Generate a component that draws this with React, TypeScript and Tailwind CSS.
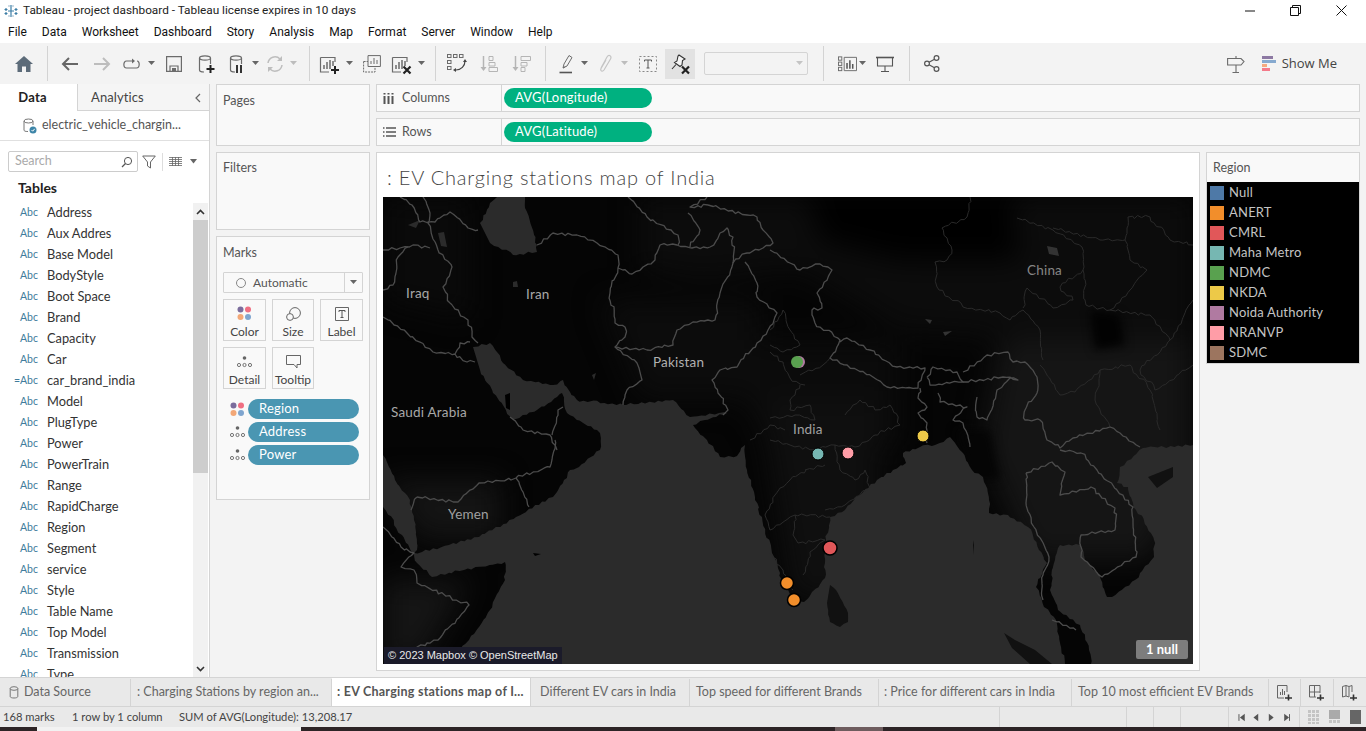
import React from "react";

const G = "#6b6b6b";
const Ico = ({ children, w = 24, h = 24 }: { children: React.ReactNode; w?: number; h?: number }) => (
  <svg width={w} height={h} viewBox={`0 0 ${w} ${h}`} fill="none" className="block">{children}</svg>
);
const Caret = ({ c = "#666" }: { c?: string }) => (
  <svg width="8" height="5" viewBox="0 0 8 5" className="block"><path d="M0 0H7L3.5 4Z" fill={c} /></svg>
);
const Slot = ({ w, children }: { w: string; children?: React.ReactNode }) => (
  <div className={`${w} flex h-full shrink-0 items-center justify-center`}>{children}</div>
);
const Sep = ({ w }: { w: string }) => (
  <div className={`${w} flex h-full shrink-0 items-center justify-center`}>
    <div className="h-[35px] w-[1px] bg-[#d3d3d3]" />
  </div>
);
const Cyl = ({ c = G }: { c?: string }) => (
  <g stroke={c} strokeWidth="1.2" fill="none">
    <ellipse cx="9" cy="5" rx="5.5" ry="2.2" />
    <path d="M3.5 5V17C3.5 18.5 5.5 19 8 19M14.5 5V11" />
  </g>
);
const Bars = () => (
  <g>
    <path d="M1.5 5.5H16V10M1.5 5.5V20H10" stroke={G} strokeWidth="1.2" />
    <path d="M5 17V13M8 17V10M11 17V8M14 14V9" stroke={G} strokeWidth="1.5" />
  </g>
);
const Plus = ({ x, y }: { x: number; y: number }) => (
  <path d={`M${x - 4} ${y}H${x + 4}M${x} ${y - 4}V${y + 4}`} stroke="#222" strokeWidth="2" />
);
const X = ({ x, y }: { x: number; y: number }) => (
  <path d={`M${x - 3.5} ${y - 3.5}L${x + 3.5} ${y + 3.5}M${x + 3.5} ${y - 3.5}L${x - 3.5} ${y + 3.5}`} stroke="#222" strokeWidth="2.2" />
);

const Toolbar = () => (
  <div className="flex h-[41px] shrink-0 bg-[#f3f3f3]">
    <Slot w="w-[8px]" />
    <Slot w="w-[32px]"><Ico w={20} h={20}><path d="M10 2L1 10H3.5V18H8V12.5H12V18H16.5V10H19Z" fill="#5c6b79" /></Ico></Slot>
    <Sep w="w-[14px]" />
    <Slot w="w-[32px]"><Ico w={18} h={16}><path d="M17 8H2M8 2L2 8L8 14" stroke="#666" strokeWidth="2" /></Ico></Slot>
    <Slot w="w-[32px]"><Ico w={18} h={16}><path d="M1 8H16M10 2L16 8L10 14" stroke="#bdbdbd" strokeWidth="2" /></Ico></Slot>
    <Slot w="w-[26px]"><Ico w={19} h={12}><path d="M11 3H4.5C1 3 1 10 4.5 10H14.5C18 10 18 3 15 3" stroke={G} strokeWidth="1.2" /><path d="M10 .5L13 3L10 5.5Z" fill={G} /></Ico></Slot>
    <Slot w="w-[16px]"><Caret /></Slot>
    <Slot w="w-[28px]"><Ico w={16} h={16}><path d="M.6.6H15.4V15.4H.6Z" stroke={G} strokeWidth="1.2" /><path d="M4 15V10H12V15" stroke={G} strokeWidth="1.2" /><path d="M6 12H10V15H6Z" fill={G} /></Ico></Slot>
    <Slot w="w-[36px]"><Ico w={20} h={22}><Cyl /><Plus x={14.5} y={16} /></Ico></Slot>
    <Slot w="w-[24px]"><Ico w={18} h={22}><Cyl c="#6b6b6b" /><path d="M10 12V20M14 12V20" stroke="#333" strokeWidth="2" /></Ico></Slot>
    <Slot w="w-[16px]"><Caret /></Slot>
    <Slot w="w-[22px]"><Ico w={18} h={18}><path d="M2 8A7 7 0 0 1 14 4M16 10A7 7 0 0 1 4 14" stroke="#bdbdbd" strokeWidth="1.5" /><path d="M16 1V6H11ZM2 17V12H7Z" fill="#bdbdbd" /></Ico></Slot>
    <Slot w="w-[16px]"><Caret c="#bdbdbd" /></Slot>
    <Sep w="w-[14px]" />
    <Slot w="w-[28px]"><Ico w={22} h={24}><Bars /><Plus x={16} y={18} /></Ico></Slot>
    <Slot w="w-[12px]"><Caret /></Slot>
    <Slot w="w-[32px]"><Ico w={18} h={18}><path d="M5 .6H17.4V11.5H5Z" stroke={G} fill="#f3f3f3" /><path d="M8 9V6M11 9V3M14 9V5" stroke={G} /><path d="M.6 6.5H5M.6 6.5V17H12V11.5" stroke={G} strokeDasharray="2 1" /></Ico></Slot>
    <Slot w="w-[28px]"><Ico w={22} h={24}><Bars /><X x={16} y={18} /></Ico></Slot>
    <Slot w="w-[12px]"><Caret /></Slot>
    <Sep w="w-[14px]" />
    <Slot w="w-[30px]"><Ico w={20} h={20}><g stroke={G}><rect x=".5" y=".5" width="3.5" height="3" /><rect x="6.5" y=".5" width="3.5" height="3" /><rect x="12.5" y=".5" width="3.5" height="3" /><rect x=".5" y="6.5" width="3.5" height="3" /><rect x=".5" y="12.5" width="3.5" height="3" /></g><path d="M18 7C18 12 14 16 9 16" stroke="#444" strokeWidth="1.2" /><path d="M16 8L18 5L20 8ZM9 14V18L6 16Z" fill="#444" /></Ico></Slot>
    <Slot w="w-[34px]"><Ico w={18} h={18}><path d="M3.5 1V14" stroke="#b5b5b5" strokeWidth="1.5" /><path d="M.5 12H6.5L3.5 16Z" fill="#b5b5b5" /><path d="M9 1.5H13V5.5H9ZM9 7.5H15V11H9ZM9 12.5H17.5V16.5H9Z" stroke="#b5b5b5" /></Ico></Slot>
    <Slot w="w-[32px]"><Ico w={20} h={18}><path d="M3.5 1V14" stroke="#b5b5b5" strokeWidth="1.5" /><path d="M.5 12H6.5L3.5 16Z" fill="#b5b5b5" /><path d="M9 1.5H18.5V5.5H9ZM9 7.5H15V11H9ZM9 12.5H13V16.5H9Z" stroke="#b5b5b5" /></Ico></Slot>
    <Sep w="w-[14px]" />
    <Slot w="w-[27px]"><Ico w={14} h={20}><path d="M4 14L5 10L10 1.5L13 3.5L8 12Z" stroke={G} /><path d="M4 14L6.5 12.5" stroke={G} /><path d="M.5 18.5H13" stroke="#555" strokeWidth="1.6" /></Ico></Slot>
    <Slot w="w-[12px]"><Caret /></Slot>
    <Slot w="w-[28px]"><Ico w={14} h={20}><path d="M3 14L9 3C11 0 14 2 12.5 5L6 16C4.5 18 2 17 3 14.5L8 6" stroke="#c4c4c4" strokeWidth="1.2" /></Ico></Slot>
    <Slot w="w-[12px]"><Caret c="#bdbdbd" /></Slot>
    <Slot w="w-[34px]"><Ico w={18} h={16}><path d="M.5.5H17.5V15.5H.5Z" stroke="#888" strokeDasharray="2 2" /><path d="M5.5 4H12.5V5.5M5.5 4V5.5M9 4V12M7.5 12H10.5" stroke="#555" /></Ico></Slot>
    <div className="flex h-[30px] w-[30px] shrink-0 items-center justify-center self-center bg-[#e2e2e2]">
      <Ico w={20} h={22}><path d="M9 2L15 6L12.5 7.500L12 12L10 13.500L4.500 9.500L7 8L8 3Z" stroke="#333" strokeWidth="1.1" fill="#f5f5f5" /><path d="M6 11.500L2 16" stroke="#333" strokeWidth="1.1" /><X x={15.5} y={17} /></Ico>
    </div>
    <Slot w="w-[9px]" />
    <div className="h-[23px] w-[104px] shrink-0 self-center flex items-center justify-end rounded-[2px] border border-[#d4d4d4] bg-[#f3f3f3] pr-[3px]"><Caret c="#c4c4c4" /></div>
    <Sep w="w-[30px]" />
    <Slot w="w-[19px]"><Ico w={20} h={16}><g stroke={G}><rect x=".5" y=".5" width="3.5" height="3.5" /><rect x=".5" y="6" width="3.5" height="3.5" /><rect x=".5" y="11.5" width="3.5" height="3.5" /><path d="M6.5 1H19.5V15H6.5Z" /></g><path d="M9.5 13V7M12.5 13V4M15.5 13V8" stroke="#555" strokeWidth="1.6" /></Ico></Slot>
    <Slot w="w-[12px]"><Caret /></Slot>
    <Slot w="w-[32px]"><Ico w={18} h={16}><path d="M0 1.5H18" stroke="#555" strokeWidth="1.6" /><path d="M1.5 1.5V10H16.5V1.5M9 10V15M5 15.5H13" stroke="#555" strokeWidth="1.1" /></Ico></Slot>
    <Sep w="w-[16px]" />
    <Slot w="w-[30px]"><Ico w={16} h={17}><circle cx="3" cy="8.5" r="2.4" stroke="#555" strokeWidth="1.2" /><circle cx="12.5" cy="3" r="2.4" stroke="#555" strokeWidth="1.2" /><circle cx="12.5" cy="14" r="2.4" stroke="#555" strokeWidth="1.2" /><path d="M5 7.3L10.5 4.2M5 9.7L10.5 12.8" stroke="#555" strokeWidth="1.2" /></Ico></Slot>
    <div className="flex-1" />
    <Slot w="w-[20px]"><Ico w={18} h={18}><path d="M.6 3.5H14L17 6.5L14 10H.6Z" stroke={G} strokeWidth="1.1" /><path d="M9 1V3.5M9 10V17M5.5 17.5H12" stroke={G} strokeWidth="1.1" /></Ico></Slot>
    <div className="w-[16px] shrink-0" />
    <div className="flex shrink-0 items-center gap-[6px] pr-[29px]">
      <svg width="14" height="16" viewBox="0 0 14 16" className="block"><path d="M0 0H11V3H0Z" fill="#8d79a3" /><path d="M0 4H14V7H0Z" fill="#86a9cf" /><path d="M0 8H5V11H0Z" fill="#f4a97f" /><path d="M0 12H8V15H0Z" fill="#f47a8a" /></svg>
      <span className="font-['Open_Sans'] text-[13px] text-[#444]">Show Me</span>
    </div>
  </div>
);

const Dots4 = () => (
  <svg width="15" height="15" viewBox="0 0 15 15" className="block"><circle cx="3.5" cy="3.5" r="3" fill="#7b6c9c" /><circle cx="11" cy="3.5" r="3" fill="#ef6f82" /><circle cx="3.5" cy="11" r="3" fill="#f3a878" /><circle cx="11" cy="11" r="3" fill="#7fa5cf" /></svg>
);
const DetailIco = () => (
  <svg width="15" height="12" viewBox="0 0 15 12" className="block"><circle cx="7.5" cy="2" r="1.8" fill="#666" /><g stroke="#666" fill="none" strokeWidth=".9"><circle cx="2" cy="9" r="1.6" /><circle cx="7.5" cy="9" r="1.6" /><circle cx="13" cy="9" r="1.6" /></g></svg>
);

const fields = ["Address", "Aux Addres", "Base Model", "BodyStyle", "Boot Space", "Brand", "Capacity", "Car", "car_brand_india", "Model", "PlugType", "Power", "PowerTrain", "Range", "RapidCharge", "Region", "Segment", "service", "Style", "Table Name", "Top Model", "Transmission", "Type"];

const Sidebar = () => (
  <div className="flex w-[210px] shrink-0 flex-col overflow-hidden border-r border-[#d4d4d4] bg-white">
    <div className="flex h-[27px] shrink-0 text-[13px] font-['Lato']">
      <div className="flex w-[77px] items-center justify-center pr-[12px] font-bold text-[#222] tracking-[.2px]">Data</div>
      <div className="flex flex-1 items-center border-b border-l border-[#d4d4d4] bg-[#f5f5f5] pl-[13px] pt-[1px] text-[#444]">
        <span className="tracking-[.1px]">Analytics</span>
        <svg width="8" height="10" viewBox="0 0 8 10" className="ml-auto mr-[7px]"><path d="M6 1L2 5L6 9" stroke="#666" strokeWidth="1.2" fill="none" /></svg>
      </div>
    </div>
    <div className="flex h-[30px] shrink-0 items-center gap-[5px] border-b border-[#e0e0e0] pl-[23px] font-['Lato'] text-[12.5px] text-[#555]">
      <svg width="14" height="16" viewBox="0 0 14 16"><path d="M1 3V12C1 13 2 13.5 5 13.5M10 3V7" stroke="#777" fill="none" /><ellipse cx="5.5" cy="3" rx="4.5" ry="2" stroke="#777" fill="none" /><circle cx="10" cy="12" r="3.5" fill="#3d85a8" /><path d="M8.5 12L9.7 13.2L11.7 10.8" stroke="#fff" fill="none" /></svg>
      <span>electric_vehicle_chargin...</span>
    </div>
    <div className="flex h-[21px] shrink-0 mt-[10px] ml-[8px] items-center">
      <div className="flex h-[21px] w-[130px] items-center justify-between rounded-[2px] border border-[#ccc] pl-[6px] pr-[4px] font-['Lato'] text-[12.5px] text-[#aaa]">
        <span>Search</span>
        <svg width="12" height="12" viewBox="0 0 12 12"><circle cx="7" cy="5" r="3.6" stroke="#555" fill="none" /><path d="M4.5 7.5L1 11" stroke="#555" strokeWidth="1.2" /></svg>
      </div>
      <svg width="14" height="14" viewBox="0 0 14 14" className="ml-[4px]"><path d="M.7 1H13.3L8.5 7V13L5.5 11V7Z" stroke="#666" fill="none" /></svg>
      <div className="ml-[6px] h-[18px] w-[1px] bg-[#ddd]" />
      <svg width="13" height="9" viewBox="0 0 13 9" className="ml-[6px]"><path d="M0 .5H13M0 2.5H13M0 4.5H13M0 6.5H13M0 8.5H13M3.5 0V9M6.5 0V9M9.5 0V9" stroke="#666" strokeWidth=".8" /></svg>
      <svg width="7" height="5" viewBox="0 0 7 5" className="ml-[8px]"><path d="M0 0H7L3.5 4.5Z" fill="#666" /></svg>
    </div>
    <div className="shrink-0 pl-[18px] pt-[6px] font-['Lato'] text-[14px] font-bold leading-[20px] text-[#222]">Tables</div>
    <div className="flex min-h-0 flex-1 pt-[5px]">
      <div className="min-w-0 flex-1 overflow-hidden">
        <div className="-mt-[1px]">
          {fields.map((f) => (
            <div key={f} className="flex h-[21px] items-center">
              <span className="w-[47px] shrink-0 pr-[9px] text-right font-['Lato'] text-[10.5px] text-[#3f7c9c]">{f === "car_brand_india" ? "=Abc" : "Abc"}</span>
              <span className="font-['Lato'] text-[12.8px] text-[#333]">{f}</span>
            </div>
          ))}
        </div>
      </div>
      <div className="mr-[1px] flex w-[15px] shrink-0 flex-col">
        <div className="flex h-[17px] shrink-0 items-center justify-center bg-[#f1f1f1]"><svg width="9" height="6" viewBox="0 0 9 6"><path d="M1 5L4.5 1.5L8 5" stroke="#333" strokeWidth="1.6" fill="none" /></svg></div>
        <div className="h-[253px] shrink-0 bg-[#cdcdcd]" />
        <div className="flex-1 bg-[#f1f1f1]" />
        <div className="flex h-[17px] shrink-0 items-center justify-center bg-[#f1f1f1]"><svg width="9" height="6" viewBox="0 0 9 6"><path d="M1 1L4.5 4.5L8 1" stroke="#333" strokeWidth="1.6" fill="none" /></svg></div>
      </div>
    </div>
  </div>
);

const MarkBtn = ({ label, children }: { label: string; children: React.ReactNode }) => (
  <div className="flex h-[42px] flex-col items-center border border-[#d4d4d4] bg-[#f9f9f9] pt-[5px]">
    <div className="flex h-[17px] items-center justify-center">{children}</div>
    <span className="mt-[3px] font-['Lato'] text-[12px] leading-[14px] text-[#444]">{label}</span>
  </div>
);
const Pill = ({ icon, label }: { icon: React.ReactNode; label: string }) => (
  <div className="flex h-[20px] items-center">
    <div className="flex w-[25px] shrink-0 items-center justify-start pl-[7px]">{icon}</div>
    <div className="flex h-[20px] w-[111px] items-center rounded-full bg-[#4a96b2] pl-[11px] font-['Lato'] text-[13px] tracking-[.2px] text-white">{label}</div>
  </div>
);

const Shelves = () => (
  <div className="flex w-[154px] shrink-0 flex-col gap-[6px]">
    <div className="h-[62px] shrink-0 border border-[#d4d4d4] bg-[#f9f9f9] pl-[6px] pt-[7px] font-['Lato'] text-[12.5px] text-[#555]">Pages</div>
    <div className="h-[78px] shrink-0 border border-[#d4d4d4] bg-[#f9f9f9] pl-[6px] pt-[6px] font-['Lato'] text-[12.5px] text-[#555]">Filters</div>
    <div className="h-[264px] shrink-0 border border-[#d4d4d4] bg-[#f9f9f9] px-[6px] pt-[8px]">
      <div className="font-['Lato'] text-[12.5px] leading-[15px] text-[#555]">Marks</div>
      <div className="mt-[12px] flex h-[21px] w-[140px] items-center rounded-[1px] border border-[#d4d4d4] font-['Lato'] text-[12px] text-[#555]">
        <span className="ml-[12px] mr-[7px] h-[10px] w-[10px] rounded-full border border-[#888]" />
        <span>Automatic</span>
        <div className="ml-auto flex h-full w-[18px] items-center justify-center border-l border-[#d4d4d4]"><Caret /></div>
      </div>
      <div className="mt-[6px] grid w-[140px] grid-cols-[43px_42px_43px] gap-[6px]">
        <MarkBtn label="Color"><Dots4 /></MarkBtn>
        <MarkBtn label="Size"><svg width="15" height="14" viewBox="0 0 15 14"><circle cx="9" cy="6" r="5.4" stroke="#666" fill="none" /><circle cx="4" cy="10" r="3.4" stroke="#666" fill="#f9f9f9" /></svg></MarkBtn>
        <MarkBtn label="Label"><svg width="14" height="14" viewBox="0 0 14 14"><path d="M.5.5H13.5V13.5H.5Z" stroke="#666" fill="none" /><path d="M4 5V3.5H10V5M7 3.5V10.5M5.5 10.5H8.5" stroke="#555" fill="none" /></svg></MarkBtn>
        <MarkBtn label="Detail"><DetailIco /></MarkBtn>
        <MarkBtn label="Tooltip"><svg width="15" height="14" viewBox="0 0 15 14"><path d="M.5.5H14.5V9.5H11V13L8 9.5H.5Z" stroke="#666" fill="none" /></svg></MarkBtn>
      </div>
      <div className="mt-[10px] flex flex-col gap-[3px]">
        <Pill icon={<Dots4 />} label="Region" />
        <Pill icon={<DetailIco />} label="Address" />
        <Pill icon={<DetailIco />} label="Power" />
      </div>
    </div>
  </div>
);

const Shelf = ({ icon, label, pill }: { icon: React.ReactNode; label: string; pill: string }) => (
  <div className="flex h-[28px] shrink-0 border border-[#d4d4d4] bg-[#f9f9f9]">
    <div className="flex w-[125px] shrink-0 items-center border-r border-[#d4d4d4] pl-[6px] font-['Lato'] text-[12.5px] text-[#555]">
      <span className="flex w-[19px] shrink-0">{icon}</span>{label}
    </div>
    <div className="flex items-center pl-[2px]">
      <div className="flex h-[20px] w-[148px] items-center rounded-full bg-[#00b180] pl-[11px] font-['Lato'] text-[13px] tracking-[.2px] text-white">{pill}</div>
    </div>
  </div>
);

// Adds a fixed, hand-tuned roughness to the polylines of the map so that they read as natural borders.
const rough = (d: string, amp: number, step = 5): string => {
  let out = "";
  let n = 0;
  d.split("M").filter(Boolean).forEach((sub) => {
    const closed = sub.trim().endsWith("Z");
    const pts = sub.replace("Z", "").trim().split("L").map((p) => p.trim().split(/\s+/).map(Number));
    out += `M${pts[0][0]} ${pts[0][1]}`;
    for (let i = 1; i < pts.length; i++) {
      const [ax, ay] = pts[i - 1];
      const [bx, by] = pts[i];
      const len = Math.hypot(bx - ax, by - ay);
      const k = Math.max(1, Math.round(len / step));
      const onEdge = (x: number, y: number) => x <= 383 || x >= 1193 || y <= 197 || y >= 664;
      for (let j = 1; j < k; j++) {
        const t = j / k;
        n += 1;
        const w = (Math.sin(n * 12.9898) * 43758.5453) % 1;
        const v = (Math.sin(n * 78.233) * 12543.123) % 1;
        const s = onEdge(ax, ay) && onEdge(bx, by) ? 0 : amp;
        out += `L${(ax + (bx - ax) * t + w * s).toFixed(1)} ${(ay + (by - ay) * t + v * s).toFixed(1)}`;
      }
      out += `L${bx} ${by}`;
    }
    if (closed) out += "Z";
  });
  return out;
};

const C = "#4c4c4c";
const borders = [
  "M423 197L430 213L428 223L438 250L452 267L443 287L450 303L468 320L472 337L478 343",
  "M383 250L400 248L413 245L430 248",
  "M383 290L393 285L398 257L408 247",
  "M383 317L407 333L433 352L455 354L460 343L470 342M455 354L467 362L475 362",
  "M400 197L412 205L420 222L435 222L450 212L468 228L478 230",
  "M537 245L553 233L577 235L597 243L618 255L618 268L610 293L615 323L625 327L625 337L615 347L637 363L642 380L627 390L623 405",
  "M618 268L632 274L643 267L655 260L660 245L677 245L692 248L710 247L727 228L733 237L733 263L720 293L715 320L693 322L677 330L673 345L647 350L615 347",
  "M628 197L647 217L678 235L678 245M688 213L700 230L690 247",
  "M708 205L747 215L757 217L763 230L773 243L747 253L733 263",
  "M707 197L690 207L708 205",
  "M745 262L757 283L757 297L777 313L768 330L757 343L737 367L720 370L712 380L718 393L728 410L723 415",
  "M770 250L790 263L800 270L820 264L832 270L817 293L822 308L812 310L815 323L840 340L830 358L873 377L887 387L918 388L925 368L897 367L870 350L847 338L840 342",
  "M927 377L933 367L957 372L963 382L930 385L927 377",
  "M963 372L987 355L1008 352L1013 362L1025 362L1037 377L1037 393L1025 410L1025 420L1040 420L1047 440L1060 448L1073 438L1110 427L1120 433L1140 447",
  "M920 388L918 398L927 407L918 413L927 423L927 443",
  "M938 393L940 402L967 407L953 420L963 423L970 447",
  "M963 382L1003 377L1018 380L1010 378L997 390L987 420L977 417L977 397",
  "M1026 473L1052 462L1065 472L1060 495L1091 487L1115 508L1115 530L1081 535L1081 557L1102 577L1136 557L1133 507L1097 470L1081 453L1060 450",
  "M1026 473L1026 503L1034 527L1049 557L1043 575L1043 600",
  "M1052 620L1076 630",
  "M417 497L458 502L479 483L516 478L550 467L555 440",
  "M516 478L529 507M417 497L411 510",
  "M510 417L523 430L550 435L557 450M552 435L558 410L563 407",
  "M383 527L401 547L414 553L401 567L414 570L417 583L469 605L438 640L417 647L401 664",
];
const faint = [
  "M970 197L967 217L942 228L952 250L947 260L935 262L937 287L963 307L1000 313L1010 320L1023 310L1040 330L1043 360",
  "M1017 218L1053 230L1082 247L1083 270L1060 287L1073 300L1053 308L1027 288L1023 308",
  "M1053 228L1100 240L1125 240L1128 217L1150 217L1170 240L1193 245",
  "M1125 240L1130 260L1147 270L1130 290L1110 310L1086 305L1083 270",
  "M1110 310L1150 315L1170 340L1140 370L1155 390L1193 365",
  "M1040 365L1060 395L1075 392L1100 370L1130 365L1150 390M1100 370L1095 400L1110 427",
  "M1150 390L1160 430M1193 300L1170 340",
  "M770 330L783 310L790 330L800 345L783 352L770 345M770 352L783 362L790 378L805 385M800 375L823 365L830 358",
  "M800 385L790 400L790 410L810 405L815 420L795 415L770 418",
  "M770 440L790 445L815 450L835 445L855 447L875 435L900 425L890 405L875 410L860 400L845 415",
  "M750 440L770 425L785 430M835 445L840 470L855 480L865 470L870 488L845 505L825 510M806 470L790 480L775 495L765 515L770 530L795 515L830 517",
  "M795 515L793 535L798 543L825 540L810 552L803 575M770 553L783 570L793 590",
  "M825 465L805 470",
];
const seas = [
  "M473 347L490 343L497 352L503 363L523 380L553 385L563 380L570 392L577 400L623 405L673 400L690 417L727 413L705 420L693 425L707 440L720 457L737 456L745 445L747 470L755 500L762 517L772 553L782 580L793 597L804 602L812 592L825 578L825 563L826 540L830 517L845 510L860 495L877 480L893 470L906 463L903 453L920 447L935 445L950 437L957 446L963 453L972 470L983 477L989 500L989 513L1008 515L1028 527L1039 550L1047 563L1036 587L1044 607L1056 620L1065 664L448 664L469 640L490 610L505 580L505 562L464 570L432 577L417 563L414 553L422 552L479 537L516 517L553 497L570 470L579 467L600 450L600 433L567 413L562 393L557 397L537 410L513 420L493 393L480 370Z",
  "M1193 445L1143 448L1120 467L1117 483L1128 487L1133 503L1154 540L1154 557L1135 580L1112 597L1107 597L1100 575L1085 560L1080 545L1060 545L1055 560L1050 590L1058 610L1080 625L1089 650L1091 664L1193 664Z",
  "M383 455L395 480L410 500L414 520L417 550L414 553L402 535L383 507Z",
  "M480 223L490 203L497 197L525 197L525 208L537 245L537 252L513 255L490 243Z",
];

const MapView = () => (
  <div className="relative h-[467px] w-full overflow-hidden bg-black">
    <svg width="810" height="467" viewBox="383 197 810 467" className="absolute inset-0 block">
      <defs>
        <filter id="b" x="-30%" y="-30%" width="160%" height="160%" colorInterpolationFilters="sRGB"><feGaussianBlur stdDeviation="14" /></filter>
        <filter id="c" x="-30%" y="-30%" width="160%" height="160%" colorInterpolationFilters="sRGB"><feGaussianBlur stdDeviation="5" /></filter>
      </defs>
      <rect x="383" y="197" width="810" height="467" fill="#050505" />
      <g filter="url(#b)">
        <path d="M640 197H1193V420L1040 340L900 330L800 270L700 280L640 270Z" fill="#0c0c0c" />
        <path d="M720 340H900V440L850 470L760 430Z" fill="#0b0b0b" />
        <path d="M760 400H880V600H790Z" fill="#0f0f0f" />
        <path d="M1000 340H1193V460L1150 560L1030 560L980 450Z" fill="#151515" />
        <path d="M810 197H1010L1020 260L900 260L820 240Z" fill="#000" />
        <path d="M383 197H470V320L383 300Z" fill="#0a0a0a" />
        <path d="M600 300H760V400H640Z" fill="#0c0c0c" />
        <path d="M383 480H500V540H420Z" fill="#141414" />
        <path d="M383 580H470L420 664H383Z" fill="#151515" />
      </g>
      <g filter="url(#c)">
        <path d="M1090 310L1120 315L1125 345L1095 350Z" fill="#020202" />
        <path d="M955 430L990 430L1000 480L975 480Z" fill="#050505" />
      </g>
      {seas.map((d) => <path key={d} fill="#2b2b2b" d={rough(d, 1.3, 4)} />)}
      <path fill="#2b2b2b" d="M438 233L444 232L447 247L441 246ZM408 225L420 220L416 228ZM513 282L517 281L518 287L513 287ZM592 375L596 373L594 380Z" />
      <path fill="#333" d="M1047 246L1057 248L1059 256L1049 254ZM925 319L932 320L930 324ZM943 332L952 331L945 336Z" />
      <path fill="#111" d={rough("M830 585L836 590L848 613L848 622L840 627L830 622L827 603Z", .8, 4)} />
      <path fill="#111" d="M1148 477L1173 467L1173 477L1157 488ZM1004 633L1015 640L1035 650L1052 664L1030 664L1012 648Z" />
      <path fill="#000" d="M533 553L541 554L535 556ZM973 545L974 540L973 555ZM505 395L510 393L510 410L506 408Z" />
      <g fill="none" strokeLinejoin="round">
        {faint.map((d) => <path key={d} d={rough(d, 1.6, 4)} stroke="#2a2a2a" strokeWidth="1" />)}
        {borders.map((d) => <path key={d} d={rough(d, 1.5, 4)} stroke={C} strokeWidth="1.3" />)}
      </g>
      <circle cx="799" cy="362" r="6" fill="#b07aa1" />
      <circle cx="797" cy="362" r="6" fill="#59a14f" />
      <circle cx="818" cy="454" r="6" fill="#76b7b2" stroke="#000" strokeWidth="1" />
      <circle cx="848" cy="453" r="6" fill="#ff9da7" stroke="#000" strokeWidth="1" />
      <circle cx="923" cy="436" r="6" fill="#edc948" stroke="#000" strokeWidth="1" />
      <circle cx="830" cy="548" r="7" fill="#e15759" stroke="#000" strokeWidth="1.5" />
      <circle cx="787" cy="583" r="6.5" fill="#f28e2b" stroke="#000" strokeWidth="1.5" />
      <circle cx="794" cy="600" r="6.5" fill="#f28e2b" stroke="#000" strokeWidth="1.5" />
    </svg>
    {[
      ["Iraq", "left-[23px] top-[88px] text-[#a8a8a8]"],
      ["Iran", "left-[143px] top-[89px] text-[#a8a8a8]"],
      ["China", "left-[644px] top-[65px] text-[#858585]"],
      ["Pakistan", "left-[270px] top-[157px] text-[#b0b0b0]"],
      ["Saudi Arabia", "left-[8px] top-[207px] text-[#a8a8a8]"],
      ["India", "left-[410px] top-[224px] text-[#a0a0a0]"],
      ["Yemen", "left-[65px] top-[309px] text-[#a0a0a0]"],
    ].map(([t, c]) => (
      <span key={t} className={`absolute font-['Lato'] text-[13.5px] leading-[16px] tracking-[.2px] ${c}`}>{t}</span>
    ))}
    <div className="absolute bottom-0 left-[1px] flex h-[17px] items-center bg-[#1b1b2a] px-[4px] font-['Liberation_Sans'] text-[11px] text-[#e8e8e8]">© 2023 Mapbox © OpenStreetMap</div>
    <div className="absolute bottom-[5px] right-[5px] flex h-[19px] w-[52px] items-center justify-center rounded-[2px] bg-[#7d7d7d] font-['Lato'] text-[13px] font-bold text-white">1 null</div>
  </div>
);

const legend: [string, string][] = [
  ["Null", "bg-[#4e79a7]"], ["ANERT", "bg-[#f28e2b]"], ["CMRL", "bg-[#e15759]"], ["Maha Metro", "bg-[#76b7b2]"], ["NDMC", "bg-[#59a14f]"], ["NKDA", "bg-[#edc948]"], ["Noida Authority", "bg-[#b07aa1]"], ["NRANVP", "bg-[#ff9da7]"], ["SDMC", "bg-[#9c755f]"],
];

const tabs: [string, string, string][] = [
  [": Charging Stations by region an...", "w-[201px]", "pl-[6px]"],
  [": EV Charging stations map of I...", "w-[199px]", "active"],
  ["Different EV cars in India", "w-[159px]", "pl-[9px]"],
  ["Top speed for different Brands", "w-[189px]", "pl-[6px]"],
  [": Price for different cars in India", "w-[193px]", "pl-[5px]"],
  ["Top 10 most efficient EV Brands", "w-[197px]", "pl-[6px]"],
];

const Bottom = () => (
  <>
    <div className="flex h-[30px] shrink-0 border-y border-[#d4d4d4] bg-[#e9e9e9] pt-[1px] font-['Lato'] text-[12.5px] text-[#666]">
      <div className="flex w-[131px] shrink-0 items-center gap-[5px] border-r border-[#d4d4d4] pl-[9px]">
        <svg width="10" height="13" viewBox="0 0 10 13"><ellipse cx="5" cy="2.5" rx="3.8" ry="1.8" stroke="#777" fill="none" /><path d="M1.2 2.5V10.5C1.2 12.5 8.8 12.5 8.8 10.5V2.5" stroke="#777" fill="none" /></svg>
        Data Source
      </div>
      {tabs.map(([t, w, p]) => (
        <div key={t} className={p === "active" ? `${w} -mt-[1px] flex shrink-0 items-center border-r border-[#d4d4d4] bg-white pl-[5px] font-bold tracking-[.25px] text-[#555]` : `${w} flex shrink-0 items-center border-r border-[#d4d4d4] ${p}`}>{t}</div>
      ))}
      <div className="flex w-[32px] shrink-0 items-center justify-center border-r border-[#d4d4d4]"><svg width="16" height="16" viewBox="0 0 16 16"><path d="M.5.5H10V7M.5.5V13H7" stroke="#666" fill="none" /><path d="M3.5 10V7M5.5 10V4M7.5 10V6" stroke="#666" /><path d="M8 13H15M11.500 9.500V15.500" stroke="#333" strokeWidth="1.6" /></svg></div>
      <div className="flex w-[33px] shrink-0 items-center justify-center border-r border-[#d4d4d4]"><svg width="16" height="16" viewBox="0 0 16 16"><path d="M.5 7H11M5.500.500V12M.5.5H11V8M.5.5V12H7" stroke="#666" fill="none" /><path d="M8 13H15M11.500 9.500V15.500" stroke="#333" strokeWidth="1.6" /></svg></div>
      <div className="flex flex-1 items-center justify-center"><svg width="16" height="16" viewBox="0 0 16 16"><path d="M.5 1.500L4 .5L7 1.500L10 .5V7M.5 1.500V12L4 11L7 12M4 .5V11M7 1.500V12" stroke="#666" fill="none" /><path d="M8 13H15M11.500 9.500V15.500" stroke="#333" strokeWidth="1.6" /></svg></div>
    </div>
    <div className="flex h-[20px] shrink-0 items-center bg-[#e9e9e9] pl-[3px] font-['Lato'] text-[11.2px] text-[#444]">
      <span className="w-[69px]">168 marks</span>
      <span className="w-[107px]">1 row by 1 column</span>
      <span className="w-[820px]">SUM of AVG(Longitude): 13,208.17</span>
      <div className="h-full w-[127px] border-l border-[#d4d4d4]" />
      <div className="h-full w-[27px] border-l border-[#d4d4d4]" />
      <div className="h-full w-[27px] border-l border-[#d4d4d4]" />
      <div className="h-full w-[48px] border-l border-[#d4d4d4]" />
      <div className="flex h-full w-[71px] items-center justify-center border-l border-[#d4d4d4]">
        <svg width="52" height="9" viewBox="0 0 54 9"><path d="M1 1V8" stroke="#555" /><path d="M7 .5V8.500L2 4.500ZM21 .5V8.500L16 4.500ZM32 .5V8.500L37 4.500ZM48 .5V8.500L53 4.500Z" fill="#555" /><path d="M53.500 1V8" stroke="#555" /></svg>
      </div>
      <div className="flex h-full flex-1 items-center gap-[10px] border-l border-[#d4d4d4] pl-[8px]">
        <svg width="11" height="14" viewBox="0 0 11 14"><path d="M0 0H3V3H0ZM4 0H7V3H4ZM8 0H11V3H8ZM0 4H3V7H0ZM4 4H7V7H4ZM8 4H11V7H8ZM0 8H3V11H0ZM4 8H7V11H4ZM8 8H11V11H8ZM0 12H3V14H0ZM4 12H7V14H4ZM8 12H11V14H8Z" fill="#c4c4c4" /></svg>
        <svg width="11" height="14" viewBox="0 0 11 14"><path d="M0 0H11V9H0Z" fill="#aaa" /><path d="M0 10H3V13H0ZM4 10H7V13H4ZM8 10H11V13H8Z" fill="#c4c4c4" /></svg>
        <svg width="11" height="14" viewBox="0 0 11 14"><path d="M0 0H11V14H0Z" fill="#666" /></svg>
      </div>
    </div>
    <div className="flex h-[4px] shrink-0 bg-[#2d2426]">
      <div className="w-[37px]" />
      <div className="w-[264px] bg-[#f2f2f2]" />
      <div className="w-[534px]" />
      <div className="w-[48px] bg-[#6e5c5e]" />
    </div>
  </>
);

export default function App() {
  return (
    <div className="flex h-[731px] w-[1366px] flex-col overflow-hidden bg-white font-['Roboto']">
      <div className="flex h-[21px] shrink-0 items-center text-[#222]">
        <svg width="16" height="16" viewBox="0 0 16 16" className="ml-[3px]">
          <g stroke="#3d7ea6" strokeWidth="1.2">
            <path d="M8 2V14M5 8H11M3 5V8M1.500 6.500H4.500M13 5V8M11.500 6.500H14.500M3 9V12M1.500 10.500H4.500M13 9V12M11.500 10.500H14.500" />
            <path d="M5 3H7M9 3H11M5 13H7M9 13H11" stroke="#9ab8cc" />
          </g>
        </svg>
        <span className="ml-[4px] text-[11.8px]">Tableau - project dashboard - Tableau license expires in 10 days</span>
        <div className="ml-auto flex items-center">
          <svg width="10" height="2" viewBox="0 0 10 2" className="mr-[35px]"><path d="M0 1H10" stroke="#111" /></svg>
          <svg width="11" height="11" viewBox="0 0 11 11" className="mr-[35px]"><path d="M.5 2.500H8.500V10.500H.5ZM2.500 2.500V.5H10.500V8.500H8.500" stroke="#111" fill="none" /></svg>
          <svg width="11" height="11" viewBox="0 0 11 11" className="mr-[19px]"><path d="M.5.5L10.500 10.500M10.500.5L.5 10.500" stroke="#111" /></svg>
        </div>
      </div>
      <div className="flex h-[22px] shrink-0 items-center gap-[15px] pl-[8px] text-[12px] text-[#111]">
        {["File", "Data", "Worksheet", "Dashboard", "Story", "Analysis", "Map", "Format", "Server", "Window", "Help"].map((m) => <span key={m}>{m}</span>)}
      </div>
      <Toolbar />
      <div className="flex min-h-0 flex-1 bg-[#f3f3f3]">
        <Sidebar />
        <div className="flex min-w-0 flex-1 gap-[6px] pl-[6px] pr-[6px]">
          <Shelves />
          <div className="flex min-w-0 flex-1 flex-col gap-[6px]">
            <Shelf label="Columns" pill="AVG(Longitude)" icon={<svg width="11" height="11" viewBox="0 0 11 11"><path d="M1.500 3V11M5.500 3V11M9.500 3V11" stroke="#555" strokeWidth="2" /><path d="M1.500 0V1.500M5.500 0V1.500M9.500 0V1.500" stroke="#555" strokeWidth="2" /></svg>} />
            <Shelf label="Rows" pill="AVG(Latitude)" icon={<svg width="13" height="10" viewBox="0 0 13 10"><path d="M3 1H13M3 5H13M3 9H13M0 1H1.500M0 5H1.500M0 9H1.500" stroke="#555" strokeWidth="1.6" /></svg>} />
            <div className="flex gap-[6px]">
              <div className="h-[519px] w-[824px] shrink-0 border border-[#d4d4d4] bg-white px-[6px]">
                <div className="flex h-[44px] items-end pb-[5px] pl-[4px] font-['Lato'] text-[20px] font-light tracking-[.8px] text-[#444]">: EV Charging stations map of India</div>
                <MapView />
              </div>
              <div className="h-[212px] flex-1 border border-[#d4d4d4] bg-[#f9f9f9]">
                <div className="flex h-[29px] items-center pl-[6px] pt-[1px] font-['Lato'] text-[12.5px] text-[#555]">Region</div>
                <div className="h-[181px] bg-black pt-[1px]">
                  {legend.map(([n, c]) => (
                    <div key={n} className="flex h-[20px] items-center pl-[3px]">
                      <span className={`h-[14px] w-[14px] shrink-0 ${c}`} />
                      <span className="ml-[5px] font-['Lato'] text-[13px] tracking-[.2px] text-[#c4c4c4]">{n}</span>
                    </div>
                  ))}
                </div>
              </div>
            </div>
          </div>
        </div>
      </div>
      <Bottom />
    </div>
  );
}
